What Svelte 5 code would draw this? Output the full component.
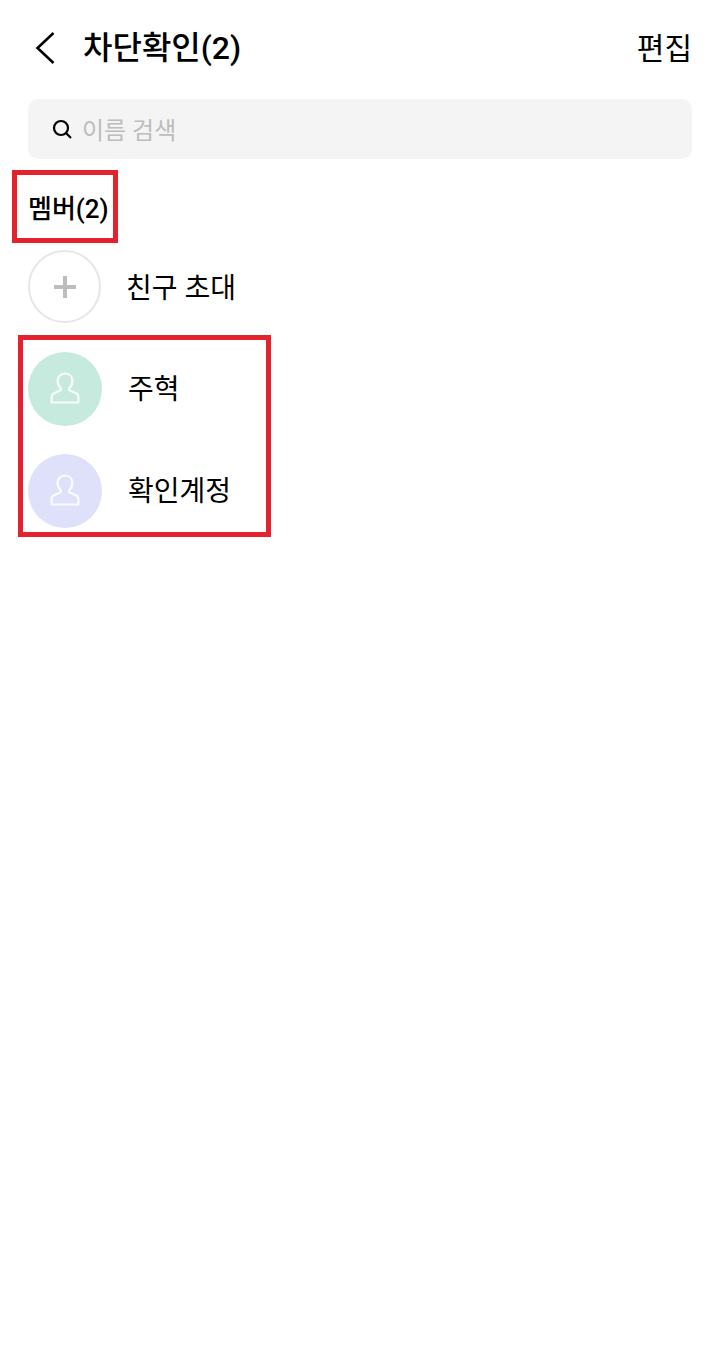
<script>
	const members = [
		{ name: '주혁', color: '#c7eadf' },
		{ name: '확인계정', color: '#dfe0fa' }
	];
</script>

<div class="page" lang="ko">
	<header class="top">
		<div class="left">
			<svg class="back" width="22" height="34" viewBox="0 0 22 34">
				<path d="M19.5 2 L3.5 17 L19.5 32" fill="none" stroke="#000" stroke-width="2.6" />
			</svg>
			<h1>차단확인(2)</h1>
		</div>
		<span class="edit">편집</span>
	</header>

	<div class="search">
		<svg width="22" height="22" viewBox="0 0 22 22">
			<circle cx="10" cy="10" r="7" fill="none" stroke="#000" stroke-width="2.2" />
			<path d="M15 15 L20 20" stroke="#000" stroke-width="2.2" fill="none" />
		</svg>
		<span>이름 검색</span>
	</div>

	<div class="section">
		<h2>멤버(2)</h2>
		<span class="mark mark-title"></span>
	</div>

	<div class="row invite">
		<div class="avatar plus">
			<svg width="24" height="24" viewBox="0 0 24 24">
				<path d="M12 1 V23 M1 12 H23" stroke="#bdbdbd" stroke-width="4" fill="none" />
			</svg>
		</div>
		<span class="name">친구 초대</span>
	</div>

	<div class="members">
		<span class="mark mark-members"></span>
		{#each members as m}
			<div class="row">
				<div class="avatar" style="background: {m.color}">
					<svg class="person" width="30" height="32" viewBox="0 0 30 32">
						<path
							d="M15 1.5 C10.4 1.5 7.6 4.8 7.6 9 C7.6 12 8.8 14.4 10.6 16 C11.4 16.8 11.2 18 10.2 18.6 L4 21.2 C2.4 22 1.6 23.2 1.6 25 V30.5 H28.4 V25 C28.4 23.2 27.6 22 26 21.2 L19.8 18.6 C18.8 18 18.6 16.8 19.4 16 C21.2 14.4 22.4 12 22.4 9 C22.4 4.8 19.6 1.5 15 1.5 Z"
							fill="none"
							stroke="#fff"
							stroke-opacity="0.85"
							stroke-width="2.2"
							stroke-linejoin="round"
						/>
					</svg>
				</div>
				<span class="name">{m.name}</span>
			</div>
		{/each}
	</div>
</div>

<style>
	:global(body) {
		background: #fff;
	}

	.page {
		width: 720px;
		height: 1354px;
		box-sizing: border-box;
		padding: 0 28px;
		background: #fff;
		color: #000;
		font-family: Roboto, "Noto Sans CJK KR", sans-serif;
		overflow: hidden;
	}

	.top {
		height: 99px;
		display: flex;
		align-items: center;
		justify-content: space-between;
		box-sizing: border-box;
		padding-bottom: 3px;
	}

	.left {
		display: flex;
		align-items: center;
	}

	.back {
		margin-left: 6px;
		margin-right: 27px;
	}

	h1 {
		margin: 0;
		font-size: 32px;
		font-weight: 500;
		line-height: 44px;
	}

	.edit {
		font-size: 30px;
		line-height: 40px;
		position: relative;
		top: 1px;
	}

	.search {
		height: 60px;
		display: flex;
		align-items: center;
		gap: 9px;
		padding-left: 23px;
		background: #f4f4f4;
		border-radius: 10px;
	}

	.search span {
		font-size: 24px;
		color: #bdbdbd;
		position: relative;
		top: -1px;
	}

	.section {
		position: relative;
		height: 91px;
		display: flex;
		align-items: flex-start;
		padding-top: 32px;
		box-sizing: border-box;
	}

	h2 {
		margin: 0;
		font-size: 26px;
		font-weight: 500;
		line-height: 36px;
	}

	.mark {
		position: absolute;
		box-sizing: border-box;
		border: 5px solid #e3222e;
	}

	.mark-title {
		left: -16px;
		top: 11px;
		width: 106px;
		height: 73px;
	}

	.row {
		height: 74px;
		display: flex;
		align-items: center;
		gap: 26px;
	}

	.invite {
		gap: 25px;
	}

	.members {
		position: relative;
		display: flex;
		flex-direction: column;
		gap: 28px;
		margin-top: 28px;
	}

	.mark-members {
		left: -10px;
		top: -17px;
		width: 253px;
		height: 202px;
	}

	.avatar {
		width: 74px;
		height: 74px;
		border-radius: 50%;
		display: flex;
		align-items: center;
		justify-content: center;
		flex: none;
		box-sizing: border-box;
	}

	.person {
		margin-bottom: 2px;
	}

	.plus {
		width: 73px;
		height: 73px;
		margin-bottom: 1px;
		border: 2px solid #e6e6e6;
	}

	.name {
		font-size: 28px;
		line-height: 40px;
		position: relative;
		top: 1px;
	}

	.invite .name {
		top: 2px;
	}
</style>
